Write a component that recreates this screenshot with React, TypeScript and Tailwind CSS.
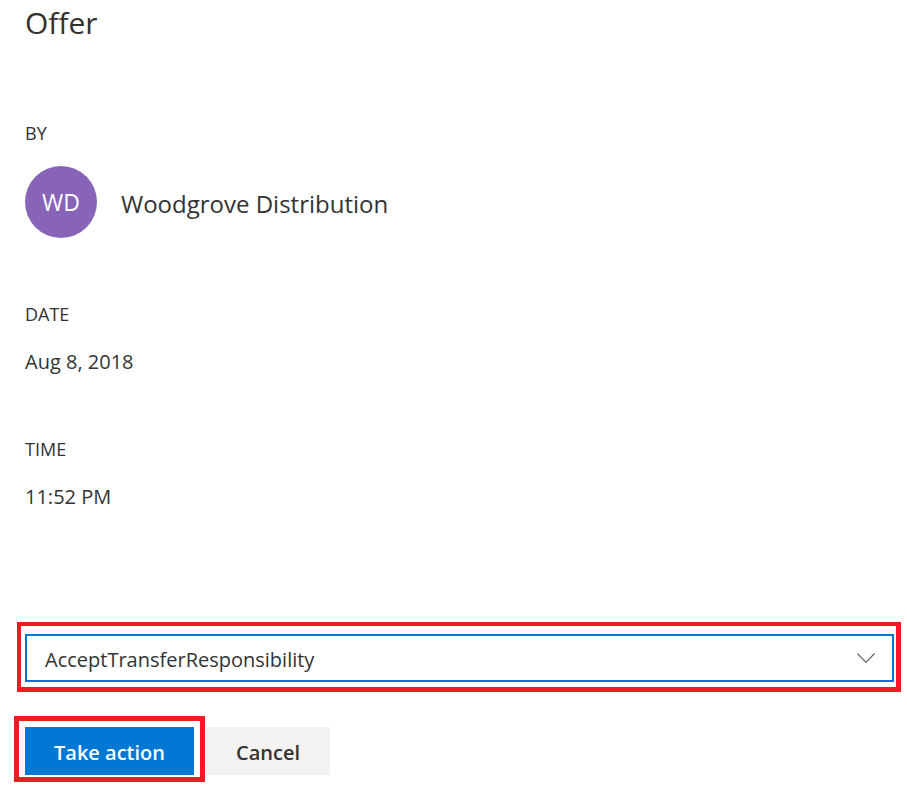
import React from "react";

const font = { fontFamily: '"Segoe UI", "Open Sans", "Noto Sans", sans-serif' };

const Field = ({ label, value, className }: { label: string; value: string; className: string }) => (
  <div className={className}>
    <div className="text-[18px] leading-[24px] text-[#333333]">{label}</div>
    <div className="mt-[22px] text-[20px] leading-[28px] text-[#333333]">{value}</div>
  </div>
);

export default function App() {
  return (
    <div className="h-[801px] w-full bg-white pl-[25px] pt-[5px]" style={font}>
      {/* header */}
      <h1 className="text-[30px] leading-[36px] font-medium text-[#323130]">Offer</h1>

      <div className="mt-[80px] text-[18px] leading-[24px] text-[#333333]">BY</div>
      <div className="mt-[21px] flex items-center gap-[24px]">
        <div className="flex h-[72px] w-[72px] items-center justify-center rounded-full bg-[#8764b8] text-[23px] text-white">
          WD
        </div>
        <div className="pt-[3px] text-[24px] leading-[32px] text-[#333333]">Woodgrove Distribution</div>
      </div>

      <Field label="DATE" value="Aug 8, 2018" className="mt-[64px]" />
      <Field label="TIME" value="11:52 PM" className="mt-[61px]" />

      {/* action picker */}
      <div className="relative mt-[123px] w-[869px]">
        <div className="flex h-[48px] items-center justify-between border-2 border-[#0078d4] bg-white pl-[18px] pr-[17px]">
          <span className="pt-[3px] text-[20px] text-[#333333]">AcceptTransferResponsibility</span>
          <svg width="18" height="11" viewBox="0 0 18 11" fill="none">
            <polyline points="0.5,0.5 9,9.5 17.5,0.5" stroke="#666666" strokeWidth="1.2" />
          </svg>
        </div>
        <div className="pointer-events-none absolute left-[-8px] top-[-12px] right-[-7px] bottom-[-10px] border-t-4 border-l-4 border-r-[5px] border-b-[5px] border-[#ed1c24]" />
      </div>

      <div className="mt-[45px] flex gap-[12px]">
        <div className="relative">
          <button className="h-[48px] w-[169px] bg-[#0078d4] pt-[3px] text-[20px] font-semibold text-white">
            Take action
          </button>
          <div className="pointer-events-none absolute left-[-11px] top-[-11px] right-[-11px] bottom-[-7px] border-[5px] border-[#ed1c24]" />
        </div>
        <button className="h-[48px] w-[124px] bg-[#f3f2f1] pt-[3px] text-[20px] font-semibold text-[#333333]">
          Cancel
        </button>
      </div>
    </div>
  );
}
